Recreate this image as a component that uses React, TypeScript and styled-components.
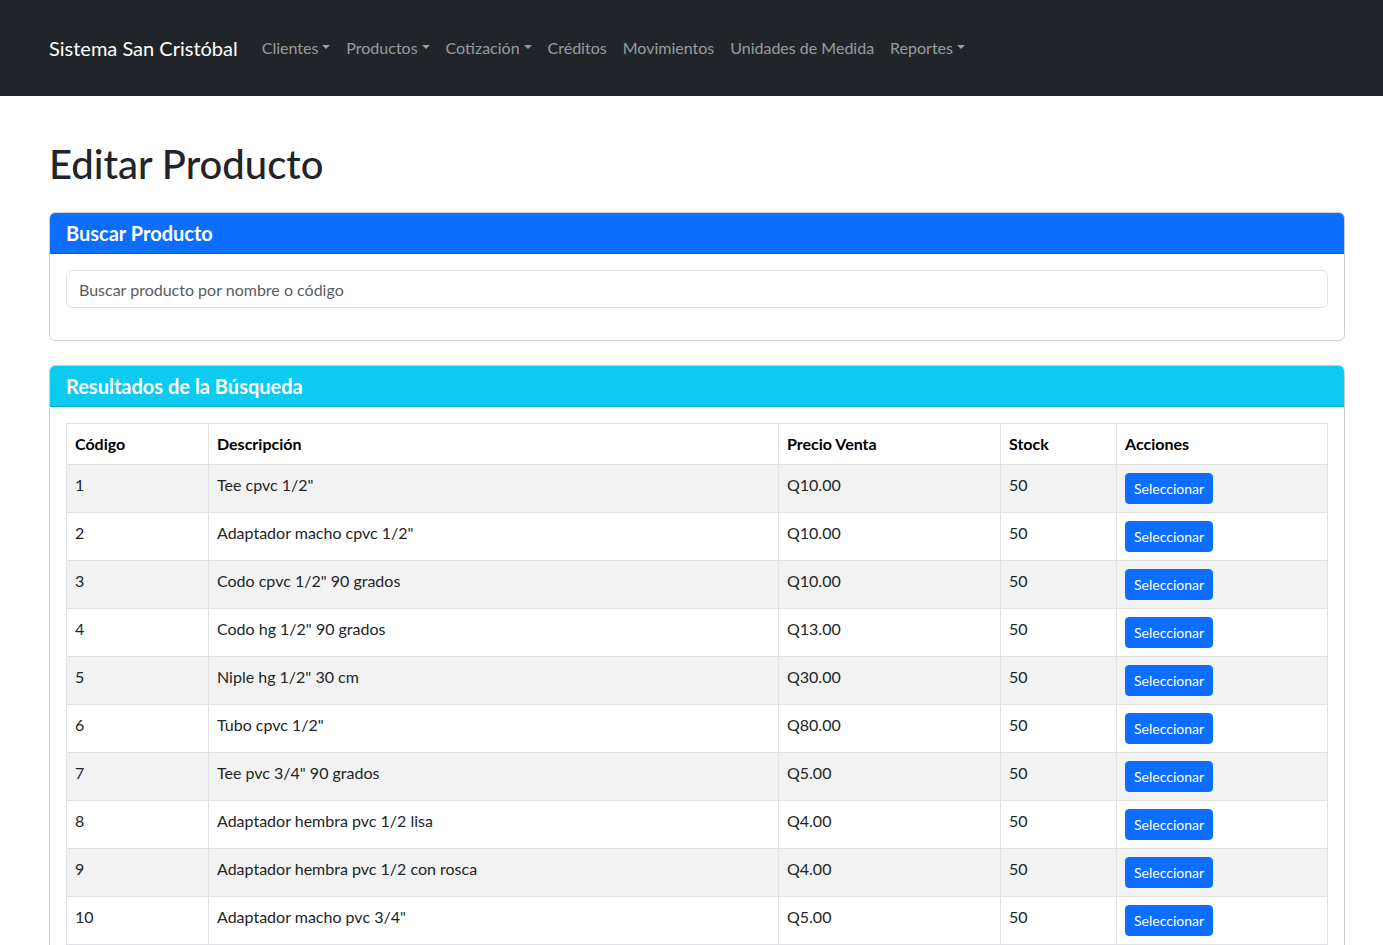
import React from "react";
import styled, { createGlobalStyle } from "styled-components";

const Global = createGlobalStyle`
  html { scrollbar-width: none; }
  html::-webkit-scrollbar { display: none; }
  body {
    margin: 0;
    font-family: Lato, "Noto Sans", sans-serif;
    font-size: 16px;
    line-height: 1.5;
    color: #212529;
    background: #fff;
  }
  * { box-sizing: border-box; }
`;

const Navbar = styled.nav`
  background: #212529;
  height: 96px;
  display: flex;
  align-items: center;
  padding: 0 38px 0 49px;
`;

const Brand = styled.a`
  font-size: 20px;
  line-height: 30px;
  color: #fff;
  margin-right: 16px;
  text-decoration: none;
  white-space: nowrap;
`;

const NavList = styled.ul`
  display: flex;
  list-style: none;
  margin: 0;
  padding: 0;
`;

const NavLink = styled.a<{ $dropdown?: boolean }>`
  display: flex;
  align-items: center;
  padding: 8px;
  color: rgba(255, 255, 255, 0.55);
  text-decoration: none;
  white-space: nowrap;
  &::after {
    content: ${(p) => (p.$dropdown ? '""' : "none")};
    display: inline-block;
    margin-left: 4px;
    border-top: 4.8px solid;
    border-left: 4.8px solid transparent;
    border-right: 4.8px solid transparent;
    border-bottom: 0;
    transform: translateY(-1px);
  }
`;

const Main = styled.main`
  padding: 0 38px 0 49px;
`;

const Title = styled.h1`
  font-size: 40px;
  font-weight: 500;
  line-height: 48px;
  margin: 44px 0 24px;
`;

const Card = styled.section`
  border: 1px solid rgba(0, 0, 0, 0.175);
  border-radius: 6px;
  margin-bottom: 24px;
  overflow: hidden;
`;

const CardHeader = styled.div<{ $bg: string }>`
  background: ${(p) => p.$bg};
  color: #fff;
  padding: 8px 16px;
  border-bottom: 1px solid rgba(0, 0, 0, 0.175);
`;

const CardTitle = styled.h5`
  margin: 0;
  font-size: 20px;
  font-weight: 700;
  line-height: 24px;
`;

const CardBody = styled.div`
  padding: 16px;
`;

const Input = styled.input`
  display: block;
  width: 100%;
  height: 38px;
  padding: 6px 12px;
  font: inherit;
  font-size: 16px;
  color: #212529;
  border: 1px solid #dee2e6;
  border-radius: 6px;
  margin-bottom: 16px;
  &::placeholder { color: #595c5f; }
  outline: none;
`;

const Table = styled.table`
  width: 100%;
  border-collapse: collapse;
  vertical-align: top;
  color: #212529;
`;

const Th = styled.th<{ $w?: number }>`
  text-align: left;
  font-weight: 700;
  color: #000;
  padding: 8px;
  border: 1px solid #dee2e6;
  width: ${(p) => (p.$w ? `${p.$w}px` : "auto")};
`;

const Tr = styled.tr<{ $striped: boolean }>`
  background: ${(p) => (p.$striped ? "#f2f2f2" : "#fff")};
`;

const Td = styled.td`
  padding: 8px;
  border: 1px solid #dee2e6;
  vertical-align: top;
`;

const Button = styled.button`
  font-family: inherit;
  font-size: 14px;
  line-height: 21px;
  padding: 4px 8px;
  color: #fff;
  background: #0d6efd;
  border: 1px solid #0d6efd;
  border-radius: 4px;
  cursor: pointer;
  display: inline-block;
`;

const navItems: { label: string; dd?: boolean }[] = [
  { label: "Clientes", dd: true },
  { label: "Productos", dd: true },
  { label: "Cotización", dd: true },
  { label: "Créditos" },
  { label: "Movimientos" },
  { label: "Unidades de Medida" },
  { label: "Reportes", dd: true },
];

const rows = [
  ["1", 'Tee cpvc 1/2"', "Q10.00", "50"],
  ["2", 'Adaptador macho cpvc 1/2"', "Q10.00", "50"],
  ["3", 'Codo cpvc 1/2" 90 grados', "Q10.00", "50"],
  ["4", 'Codo hg 1/2" 90 grados', "Q13.00", "50"],
  ["5", 'Niple hg 1/2" 30 cm', "Q30.00", "50"],
  ["6", 'Tubo cpvc 1/2"', "Q80.00", "50"],
  ["7", 'Tee pvc 3/4" 90 grados', "Q5.00", "50"],
  ["8", "Adaptador hembra pvc 1/2 lisa", "Q4.00", "50"],
  ["9", "Adaptador hembra pvc 1/2 con rosca", "Q4.00", "50"],
  ["10", 'Adaptador macho pvc 3/4"', "Q5.00", "50"],
];

export default function App() {
  return (
    <>
      <Global />
      <Navbar>
        <Brand href="#">Sistema San Cristóbal</Brand>
        <NavList>
          {navItems.map((n) => (
            <li key={n.label}>
              <NavLink href="#" $dropdown={n.dd}>
                {n.label}
              </NavLink>
            </li>
          ))}
        </NavList>
      </Navbar>
      <Main>
        <Title>Editar Producto</Title>
        <Card>
          <CardHeader $bg="#0d6efd">
            <CardTitle>Buscar Producto</CardTitle>
          </CardHeader>
          <CardBody>
            <Input placeholder="Buscar producto por nombre o código" />
          </CardBody>
        </Card>
        <Card>
          <CardHeader $bg="#0dcaf0">
            <CardTitle>Resultados de la Búsqueda</CardTitle>
          </CardHeader>
          <CardBody>
            <Table>
              <thead>
                <tr>
                  <Th $w={142}>Código</Th>
                  <Th $w={570}>Descripción</Th>
                  <Th $w={222}>Precio Venta</Th>
                  <Th $w={116}>Stock</Th>
                  <Th>Acciones</Th>
                </tr>
              </thead>
              <tbody>
                {rows.map((r, i) => (
                  <Tr key={r[0]} $striped={i % 2 === 0}>
                    <Td>{r[0]}</Td>
                    <Td>{r[1]}</Td>
                    <Td>{r[2]}</Td>
                    <Td>{r[3]}</Td>
                    <Td>
                      <Button>Seleccionar</Button>
                    </Td>
                  </Tr>
                ))}
              </tbody>
            </Table>
          </CardBody>
        </Card>
      </Main>
    </>
  );
}
